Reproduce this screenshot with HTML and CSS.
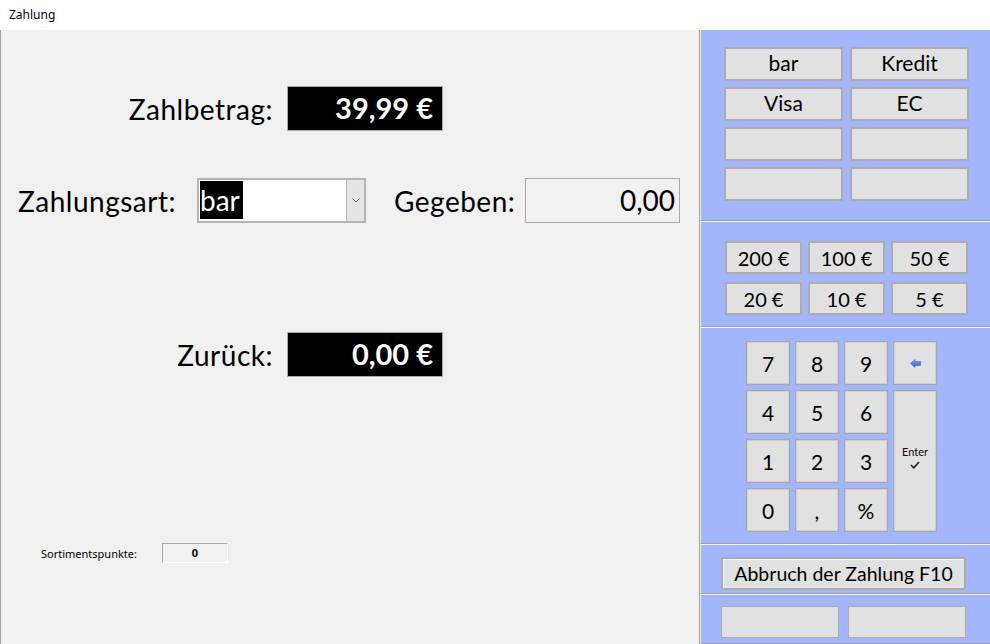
FILE: index.html
```html
<!DOCTYPE html>
<html lang="de">
  <head>
    <meta charset="UTF-8" />
    <meta name="viewport" content="width=device-width, initial-scale=1.0" />
    <title>Zahlung</title>
    <link rel="stylesheet" href="styles.css">
  </head>
  <body>
    <div class="titlebar">Zahlung</div>
    <div class="window">
      <div class="form">
        <div class="row amount-row">
          <span class="label">Zahlbetrag:</span>
          <div class="value-box">39,99 €</div>
        </div>

        <div class="row pay-row">
          <span class="label pay-label">Zahlungsart:</span>
          <div class="select">
            <span class="select-text">bar</span>
            <span class="select-btn">
              <svg width="8" height="5" viewBox="0 0 8 5">
                <path d="M0.5 0.5 L4 4 L7.5 0.5" fill="none" stroke="#606060" stroke-width="1" />
              </svg>
            </span>
          </div>
          <span class="label given-label">Gegeben:</span>
          <div class="given-box">0,00</div>
        </div>

        <div class="row amount-row back-row">
          <span class="label">Zurück:</span>
          <div class="value-box">0,00 €</div>
        </div>

        <div class="row points-row">
          <span class="small-label">Sortimentspunkte:</span>
          <div class="points-box">0</div>
        </div>
      </div>

      <div class="panel">
        <div class="section types">
          <button class="btn">bar</button>
          <button class="btn">Kredit</button>
          <button class="btn">Visa</button>
          <button class="btn">EC</button>
          <button class="btn"></button>
          <button class="btn"></button>
          <button class="btn"></button>
          <button class="btn"></button>
        </div>

        <div class="section notes">
          <button class="btn">200 €</button>
          <button class="btn">100 €</button>
          <button class="btn">50 €</button>
          <button class="btn">20 €</button>
          <button class="btn">10 €</button>
          <button class="btn">5 €</button>
        </div>

        <div class="section numpad">
          <button class="key">7</button>
          <button class="key">8</button>
          <button class="key">9</button>
          <button class="key">
            <svg width="11" height="9" viewBox="0 0 11 9">
              <defs>
                <linearGradient id="arrowfill" x1="0" y1="0" x2="0" y2="1">
                  <stop offset="0" stop-color="#7fa8f0" />
                  <stop offset="1" stop-color="#2b5fc8" />
                </linearGradient>
              </defs>
              <path d="M0.5 4.5 L5 0.5 L5 2.5 L10.5 2.5 L10.5 6.5 L5 6.5 L5 8.5 Z" fill="url(#arrowfill)" stroke="#3a64b8" stroke-width="0.6" />
            </svg>
          </button>
          <button class="key">4</button>
          <button class="key">5</button>
          <button class="key">6</button>
          <button class="key enter">
            <span class="enter-text">Enter</span>
            <svg width="10" height="8" viewBox="0 0 10 8">
              <path d="M1 4 L3.8 6.8 L9 1" fill="none" stroke="#222" stroke-width="1.6" />
            </svg>
          </button>
          <button class="key">1</button>
          <button class="key">2</button>
          <button class="key">3</button>
          <button class="key">0</button>
          <button class="key">,</button>
          <button class="key">%</button>
        </div>

        <div class="section cancel">
          <button class="btn wide">Abbruch der Zahlung F10</button>
        </div>

        <div class="section extra">
          <button class="btn flat"></button>
          <button class="btn flat"></button>
        </div>
      </div>
    </div>
  </body>
</html>
```

FILE: styles.css
```css
* {
  box-sizing: border-box;
}

body {
  margin: 0;
  width: 990px;
  height: 644px;
  overflow: hidden;
  font-family: Lato, "Open Sans", sans-serif;
  color: #000;
  background: #f0f0f0;
}

.titlebar {
  height: 30px;
  background: #fff;
  padding: 7px 0 0 9px;
  font-family: "Noto Sans", "Open Sans", sans-serif;
  font-size: 12px;
  line-height: 16px;
}

.window {
  display: flex;
  height: 614px;
}

/* left form */
.form {
  width: 699px;
  border-left: 1px solid #a0a0a0;
  padding-top: 56px;
}

.row {
  display: flex;
  align-items: center;
}

.label {
  font-size: 28px;
  letter-spacing: 0.5px;
  line-height: 32px;
}

.amount-row {
  height: 45px;
}

.amount-row .label {
  width: 272px;
  text-align: right;
}

.value-box {
  width: 156px;
  height: 45px;
  margin-left: 14px;
  background: #000;
  border: 1px solid #a8a8a8;
  color: #fff;
  font-weight: 700;
  font-size: 29px;
  line-height: 41px;
  text-align: right;
  padding-right: 9px;
}

.pay-row {
  height: 45px;
  margin-top: 47px;
  padding-left: 17px;
}

.pay-label {
  width: 179px;
}

.select {
  display: flex;
  width: 169px;
  height: 45px;
  background: #fff;
  border: 2px solid #b4b4b4;
}

.select-text {
  flex: 1;
  padding: 1px 0 0 1px;
  font-size: 28px;
  line-height: 38px;
  color: #fff;
  background: linear-gradient(#000, #000) no-repeat 1px 1px / 43px 38px;
}

.select-btn {
  width: 18px;
  display: flex;
  align-items: center;
  justify-content: center;
  background: #e4e4e4;
  border-left: 1px solid #b4b4b4;
}

.given-label {
  margin-left: 28px;
  width: 131px;
}

.given-box {
  width: 155px;
  height: 45px;
  background: #f0f0f0;
  border: 1px solid #a8a8a8;
  font-size: 28px;
  line-height: 43px;
  text-align: right;
  padding-right: 4px;
}

.back-row {
  margin-top: 109px;
}

.points-row {
  height: 20px;
  margin-top: 166px;
  padding-left: 40px;
}

.small-label {
  font-family: "Noto Sans", "Open Sans", sans-serif;
  font-size: 11px;
  width: 121px;
}

.points-box {
  width: 66px;
  height: 20px;
  border: 1px solid #a8a8a8;
  border-right-color: #fff;
  border-bottom-color: #fff;
  font-family: "Noto Sans", sans-serif;
  font-size: 11px;
  font-weight: 700;
  line-height: 18px;
  text-align: center;
}

/* right panel */
.panel {
  width: 291px;
  border-left: 1px solid #a0a0a0;
  display: flex;
  flex-direction: column;
}

.section {
  background: #a3b6fd;
  border-left: 1px solid #f0f0f0;
  border-top: 1px solid #f4f4f4;
  border-bottom: 1px solid #a0a0a0;
}

.btn {
  background: #e1e1e1;
  border: 2px solid #acacac;
  font-family: Lato, "Open Sans", sans-serif;
  font-size: 21px;
  color: #000;
  padding: 0;
}

.types {
  height: 191px;
  border-top: none;
  display: grid;
  grid-template-columns: 119px 119px;
  grid-auto-rows: 34px;
  column-gap: 7px;
  row-gap: 6px;
  padding: 17px 0 0 23px;
  align-content: start;
}

.types .btn {
  line-height: 26px;
  padding-bottom: 3px;
}

.notes {
  height: 106px;
  display: grid;
  grid-template-columns: repeat(3, 77px);
  grid-auto-rows: 33px;
  column-gap: 6px;
  row-gap: 8px;
  padding: 19px 0 0 24px;
  align-content: start;
}

.notes .btn {
  font-size: 20px;
}

.numpad {
  height: 217px;
  display: grid;
  grid-template-columns: repeat(4, 44px);
  grid-auto-rows: 44px;
  gap: 5px;
  padding: 13px 0 0 45px;
  align-content: start;
}

.key {
  background: #e1e1e1;
  border: 1px solid #a8a8a8;
  box-shadow: inset 0 0 0 1px #cfcfcf;
  font-family: Lato, "Open Sans", sans-serif;
  font-size: 21px;
  color: #000;
  padding: 0;
  display: flex;
  align-items: center;
  justify-content: center;
}

.enter {
  grid-column: 4;
  grid-row: 2 / span 3;
  flex-direction: column;
  gap: 3px;
  padding-bottom: 8px;
}

.enter-text {
  font-size: 11px;
  color: #200000;
}

.cancel {
  height: 50px;
  padding: 12px 0 0 20px;
}

.wide {
  width: 245px;
  height: 33px;
  font-size: 19.5px;
  box-shadow: inset 1px 1px 0 #f4f4f4;
}

.extra {
  height: 50px;
  display: flex;
  gap: 9px;
  padding: 11px 0 0 20px;
}

.flat {
  width: 118px;
  height: 32px;
  border-width: 1px;
}
```
